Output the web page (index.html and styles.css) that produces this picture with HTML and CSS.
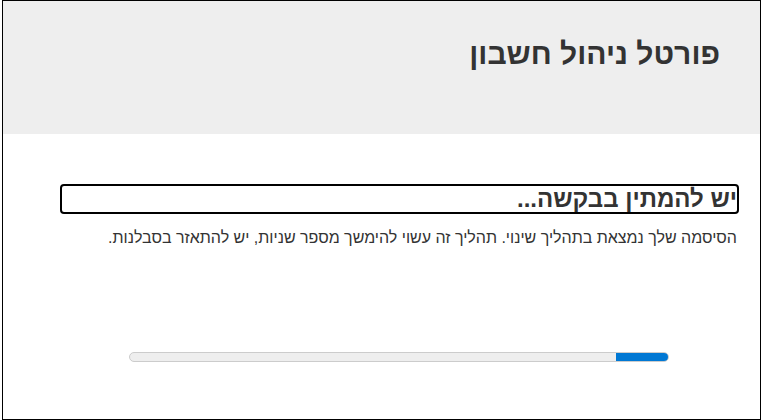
FILE: index.html
```html
<!DOCTYPE html>
<html lang="he" dir="rtl">
<head>
<meta charset="utf-8">
<title>פורטל ניהול חשבון</title>
<link rel="stylesheet" href="styles.css">
</head>
<body>
<div class="frame">
  <header class="header">
    <h1 class="title">פורטל ניהול חשבון</h1>
  </header>
  <main class="content">
    <h2 class="wait">יש להמתין בבקשה...</h2>
    <p class="desc">הסיסמה שלך נמצאת בתהליך שינוי. תהליך זה עשוי להימשך מספר שניות, יש להתאזר בסבלנות.</p>
    <div class="progress-wrap">
      <div class="progress"><div class="progress-fill" style="width: 52px"></div></div>
    </div>
  </main>
</div>
</body>
</html>
```

FILE: styles.css
```css
html, body {
  margin: 0;
  padding: 0;
  background: #fff;
}
body {
  font-family: "Liberation Sans", Arial, "DejaVu Sans", sans-serif;
  color: #333;
}
.frame {
  box-sizing: border-box;
  width: 759px;
  height: 420px;
  margin-left: 1px;
  border: 1px solid #000;
  display: flex;
  flex-direction: column;
}
.header {
  box-sizing: border-box;
  background: #eeeeee;
  height: 133px;
  padding: 38px 40px 0 0;
}
.title {
  margin: 0;
  font-size: 30px;
  font-weight: bold;
  color: #333;
  line-height: 30px;
}
.content {
  padding: 50px 21px 0 57px;
}
.wait {
  box-sizing: border-box;
  margin: 0;
  height: 30px;
  border: 2px solid #000;
  border-radius: 4px;
  font-size: 24px;
  font-weight: bold;
  line-height: 26px;
  padding: 0;
  color: #333;
  white-space: nowrap;
}
.desc {
  margin: 15px 0 0;
  padding-right: 2px;
  font-size: 16px;
  line-height: 18px;
  color: #333;
}
.progress-wrap {
  padding: 105px 70px 0 69px;
}
.progress {
  box-sizing: border-box;
  height: 10px;
  background: #eeeeee;
  border: 1px solid #ccc;
  border-radius: 5px;
  overflow: hidden;
  display: flex;
}
.progress-fill {
  background: #0078d4;
  height: 100%;
}
```
